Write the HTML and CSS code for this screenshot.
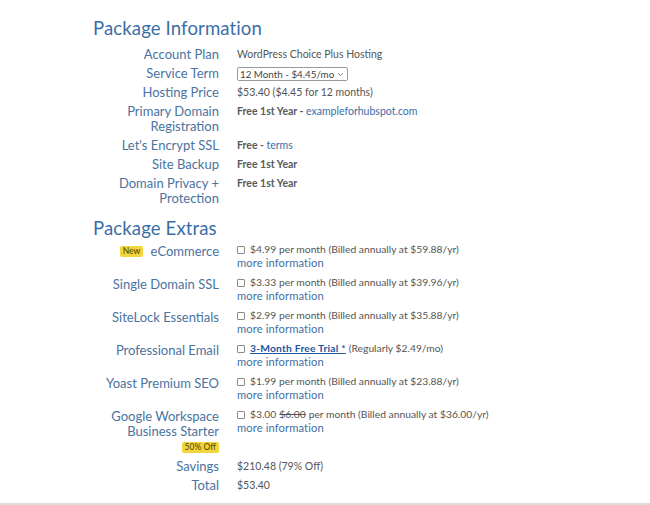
FILE: index.html
```html
<!DOCTYPE html>
<html lang="en">
<head>
<meta charset="utf-8">
<title>Package Information</title>
<link rel="stylesheet" href="styles.css">
</head>
<body>
<div class="page">
  <h2 class="heading">Package Information</h2>
  <div class="info">
    <div class="row"><div class="label">Account Plan</div><div class="value">WordPress Choice Plus Hosting</div></div>
    <div class="row"><div class="label">Service Term</div><div class="value"><span class="select">12 Month - $4.45/mo <svg class="chev" width="7" height="5" viewBox="0 0 7 5"><path d="M1 1.2 L3.5 3.6 L6 1.2" fill="none" stroke="#777" stroke-width="0.9"/></svg></span></div></div>
    <div class="row"><div class="label">Hosting Price</div><div class="value">$53.40 ($4.45 for 12 months)</div></div>
    <div class="row"><div class="label">Primary Domain Registration</div><div class="value strong">Free 1st Year - <a class="link">exampleforhubspot.com</a></div></div>
    <div class="row"><div class="label">Let's Encrypt SSL</div><div class="value strong">Free - <a class="link">terms</a></div></div>
    <div class="row"><div class="label">Site Backup</div><div class="value strong">Free 1st Year</div></div>
    <div class="row"><div class="label">Domain Privacy + Protection</div><div class="value strong">Free 1st Year</div></div>
  </div>

  <h2 class="heading heading-extras">Package Extras</h2>
  <div class="extras">
    <div class="row"><div class="label"><span class="badge badge-new">New</span> eCommerce</div><div class="value"><div class="line"><span class="check"></span>$4.99 per month (Billed annually at $59.88/yr)</div><a class="link">more information</a></div></div>
    <div class="row"><div class="label">Single Domain SSL</div><div class="value"><div class="line"><span class="check"></span>$3.33 per month (Billed annually at $39.96/yr)</div><a class="link">more information</a></div></div>
    <div class="row"><div class="label">SiteLock Essentials</div><div class="value"><div class="line"><span class="check"></span>$2.99 per month (Billed annually at $35.88/yr)</div><a class="link">more information</a></div></div>
    <div class="row"><div class="label">Professional Email</div><div class="value"><div class="line"><span class="check"></span><a class="trial">3-Month Free Trial *</a> (Regularly $2.49/mo)</div><a class="link">more information</a></div></div>
    <div class="row"><div class="label">Yoast Premium SEO</div><div class="value"><div class="line"><span class="check"></span>$1.99 per month (Billed annually at $23.88/yr)</div><a class="link">more information</a></div></div>
    <div class="row"><div class="label">Google Workspace Business Starter<div class="badge-wrap"><span class="badge badge-off">50% Off</span></div></div><div class="value"><div class="line"><span class="check"></span>$3.00 <s class="old">$6.00</s> per month (Billed annually at $36.00/yr)</div><a class="link">more information</a></div></div>
  </div>

  <div class="summary">
    <div class="row"><div class="label">Savings</div><div class="value">$210.48 (79% Off)</div></div>
    <div class="row"><div class="label">Total</div><div class="value">$53.40</div></div>
  </div>
</div>
<div class="footer-line"></div>
</body>
</html>
```
FILE: styles.css
```css
html, body {
  margin: 0;
  padding: 0;
  background: #ffffff;
}
body {
  font-family: "Lato", "Open Sans", sans-serif;
  width: 650px;
  height: 505px;
  position: relative;
  overflow: hidden;
}
.page {
  padding-left: 93px;
  padding-top: 16px;
}
.heading {
  margin: 0;
  font-family: "Lato", "Open Sans", sans-serif;
  font-weight: 400;
  font-size: 18.6px;
  line-height: 24px;
  color: #3b6ea6;
  letter-spacing: 0.1px;
}
.heading-extras {
  margin-top: 10px;
}
.info, .extras, .summary {
  display: flex;
  flex-direction: column;
}
.info {
  margin-top: 7px;
  gap: 4px;
}
.extras {
  margin-top: 4px;
  gap: 8px;
}
.summary {
  margin-top: 6px;
  gap: 4px;
}
.row {
  display: grid;
  grid-template-columns: 126px 1fr;
  column-gap: 18px;
  align-items: start;
}
.label {
  font-size: 13px;
  line-height: 15px;
  color: #4a73a0;
  text-align: right;
}
.value {
  font-size: 10.5px;
  line-height: 15px;
  color: #555555;
}
.value.strong {
  font-weight: 700;
  color: #5a5a5a;
}
.strong .link {
  font-weight: 400;
}
.link {
  color: #3b6ea6;
  text-decoration: none;
}
.extras .value {
  font-size: 10.3px;
  line-height: 13px;
  margin-top: -1px;
}
.extras .value .link {
  display: block;
  font-size: 11.2px;
  line-height: 13px;
  color: #3f71a6;
  letter-spacing: 0.1px;
}
.line {
  display: flex;
  align-items: center;
  white-space: nowrap;
  height: 13px;
}
.check {
  width: 6px;
  height: 6px;
  border: 1px solid #8a8a8a;
  border-radius: 1px;
  margin-right: 5px;
  flex: none;
  background: #fff;
}
.trial {
  font-weight: 700;
  color: #1f57a0;
  text-decoration: underline;
  margin-right: 3px;
  letter-spacing: 0.2px;
}
.old {
  margin: 0 3px;
}
.select {
  display: inline-flex;
  align-items: center;
  height: 12px;
  border: 1px solid #9a9a9a;
  border-radius: 2px;
  padding: 0 3px 0 2px;
  font-size: 9.8px;
  line-height: 12px;
  color: #444;
  gap: 3px;
  vertical-align: middle;
}
.chev {
  display: block;
}
.badge {
  display: inline-block;
  background: #f3d63e;
  color: #6b5800;
  font-size: 8.5px;
  line-height: 11px;
  border-radius: 2px;
  padding: 0 3px;
  vertical-align: 2px;
  font-weight: 600;
}
.badge-new {
  margin-right: 4px;
}
.badge-wrap {
  margin-top: 3px;
  line-height: 11px;
}
.footer-line {
  position: absolute;
  left: 0;
  right: 0;
  bottom: 0;
  height: 2px;
  background: #dddddd;
}
```
